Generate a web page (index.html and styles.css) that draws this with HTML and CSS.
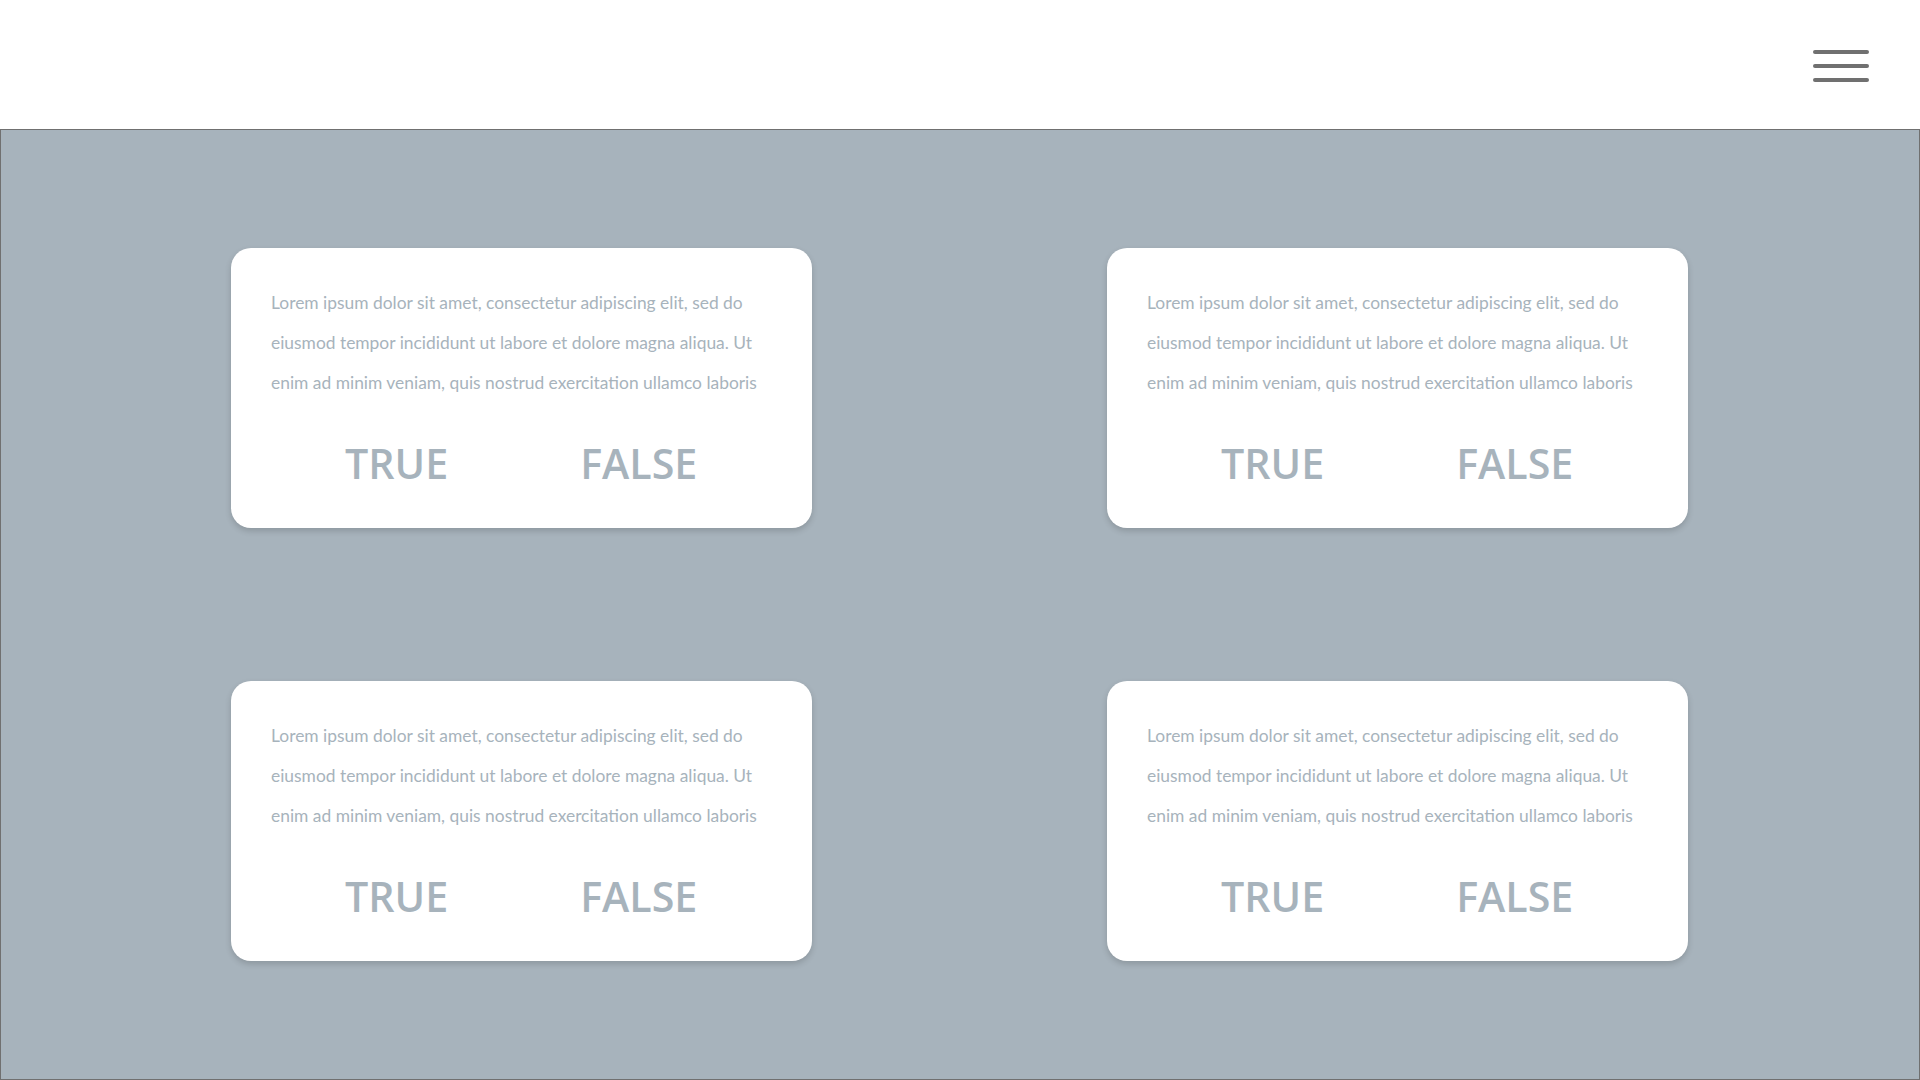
FILE: index.html
```html
<!DOCTYPE html>
<html lang="en">
<head>
<meta charset="utf-8">
<title>Quiz</title>
<link rel="stylesheet" href="styles.css">
</head>
<body>
<header class="header">
  <button class="menu" aria-label="Menu">
    <span class="bar"></span>
    <span class="bar"></span>
    <span class="bar"></span>
  </button>
</header>
<main class="board">
  <div class="grid">
    <section class="card">
      <p class="text">Lorem ipsum dolor sit amet, consectetur adipiscing elit, sed do<br>eiusmod tempor incididunt ut labore et dolore magna aliqua. Ut<br>enim ad minim veniam, quis nostrud exercitation ullamco laboris</p>
      <div class="choices"><span class="choice">TRUE</span><span class="choice">FALSE</span></div>
    </section>
    <section class="card">
      <p class="text">Lorem ipsum dolor sit amet, consectetur adipiscing elit, sed do<br>eiusmod tempor incididunt ut labore et dolore magna aliqua. Ut<br>enim ad minim veniam, quis nostrud exercitation ullamco laboris</p>
      <div class="choices"><span class="choice">TRUE</span><span class="choice">FALSE</span></div>
    </section>
    <section class="card">
      <p class="text">Lorem ipsum dolor sit amet, consectetur adipiscing elit, sed do<br>eiusmod tempor incididunt ut labore et dolore magna aliqua. Ut<br>enim ad minim veniam, quis nostrud exercitation ullamco laboris</p>
      <div class="choices"><span class="choice">TRUE</span><span class="choice">FALSE</span></div>
    </section>
    <section class="card">
      <p class="text">Lorem ipsum dolor sit amet, consectetur adipiscing elit, sed do<br>eiusmod tempor incididunt ut labore et dolore magna aliqua. Ut<br>enim ad minim veniam, quis nostrud exercitation ullamco laboris</p>
      <div class="choices"><span class="choice">TRUE</span><span class="choice">FALSE</span></div>
    </section>
  </div>
</main>
</body>
</html>
```
FILE: styles.css
```css
* { box-sizing: border-box; }
html, body { margin: 0; padding: 0; }
body {
  width: 1920px;
  height: 1080px;
  overflow: hidden;
  background: #ffffff;
  font-family: "Open Sans", "Noto Sans", sans-serif;
}
.header {
  height: 129px;
  display: flex;
  justify-content: flex-end;
  align-items: flex-start;
  padding: 50px 51px 0 0;
}
.menu {
  width: 56px;
  padding: 0;
  border: 0;
  background: none;
  display: flex;
  flex-direction: column;
  gap: 10px;
}
.bar {
  display: block;
  width: 56px;
  height: 4px;
  border-radius: 2px;
  background: #707070;
}
.board {
  height: 951px;
  background: #a7b3bc;
  border: 1px solid #707070;
  padding: 118px 230px 0 230px;
}
.grid {
  display: grid;
  grid-template-columns: 581px 581px;
  column-gap: 295px;
  row-gap: 153px;
}
.card {
  height: 280px;
  background: #ffffff;
  border-radius: 20px;
  box-shadow: 0 3px 6px rgba(0, 0, 0, 0.16);
  padding: 35px 20px 0 40px;
}
.text {
  margin: 0;
  font-family: "Lato", "Open Sans", sans-serif;
  font-size: 17.4px;
  line-height: 40px;
  color: #a7b3bc;
  white-space: nowrap;
}
.choices {
  display: flex;
  padding-left: 74px;
  gap: 132px;
  margin-top: 33px;
}
.choice {
  font-size: 41.2px;
  font-weight: 600;
  line-height: 54px;
  color: #a7b3bc;
}
```
